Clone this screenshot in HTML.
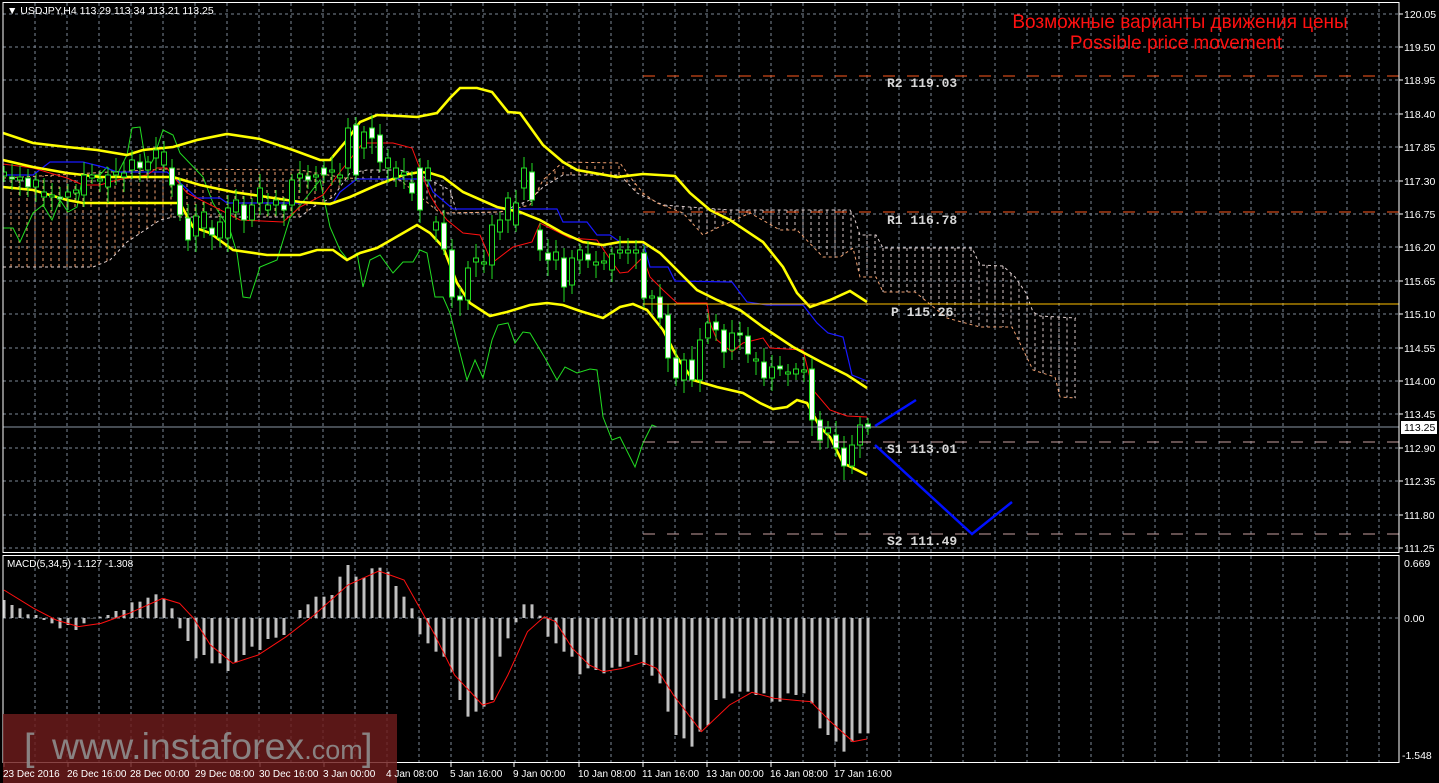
<!DOCTYPE html>
<html><head><meta charset="utf-8"><style>
html,body{margin:0;padding:0;background:#000;width:1439px;height:783px;overflow:hidden}
svg{display:block}
text{font-family:"Liberation Sans",sans-serif}
text.mono{font-family:"Liberation Mono",monospace}
</style></head><body>
<svg id="s" width="1439" height="783" xmlns="http://www.w3.org/2000/svg">
<defs>
<clipPath id="cm"><rect x="3" y="3" width="1396" height="549"/></clipPath>
<clipPath id="cd"><rect x="3" y="556" width="1396" height="206"/></clipPath>
</defs>
<g id="grid"></g>
<g id="cloud" clip-path="url(#cm)"></g>
<g id="lines" clip-path="url(#cm)"></g>
<g id="candles" clip-path="url(#cm)"></g>
<g id="macd" clip-path="url(#cd)"></g>
<line x1="643" y1="76" x2="1399" y2="76" stroke="#ff5a1e" stroke-width="1" stroke-dasharray="12,12"/>
<line x1="643" y1="212" x2="1399" y2="212" stroke="#ff5a1e" stroke-width="1" stroke-dasharray="12,12"/>
<line x1="643" y1="304" x2="1399" y2="304" stroke="#ffc000" stroke-width="1"/>
<line x1="643" y1="442" x2="1399" y2="442" stroke="#c8a0a0" stroke-width="1" stroke-dasharray="12,12"/>
<line x1="643" y1="534" x2="1399" y2="534" stroke="#c8a0a0" stroke-width="1" stroke-dasharray="12,12"/>
<line x1="3" y1="427" x2="1399" y2="427" stroke="#8a96a4" stroke-width="1"/>
<g font-weight="bold" font-size="13" fill="#d8d8d8">
<text class="mono" x="887" y="87">R2 119.03</text>
<text class="mono" x="887" y="224">R1 116.78</text>
<text class="mono" x="891" y="316">P 115.26</text>
<text class="mono" x="887" y="453">S1 113.01</text>
<text class="mono" x="887" y="545">S2 111.49</text>
</g>
<polyline points="875,426 916,400" fill="none" stroke="#0010ff" stroke-width="2.5"/>
<polyline points="875,445 972,534 1012,502" fill="none" stroke="#0010ff" stroke-width="2.5"/>
<text x="1180" y="28" font-size="19" fill="#ff1010" text-anchor="middle">Возможные варианты движения цены</text>
<text x="1176" y="49" font-size="19" fill="#ff1010" text-anchor="middle">Possible price movement</text>
<rect x="3" y="2.5" width="1396" height="550" fill="none" stroke="#fff" stroke-width="1"/>
<rect x="3" y="555.5" width="1396" height="207" fill="none" stroke="#fff" stroke-width="1"/>
<text x="7" y="14" font-size="10.5" fill="#fff">▼ USDJPY,H4  113.29 113.34 113.21 113.25</text>
<text x="7" y="567" font-size="10" fill="#fff">MACD(5,34,5) -1.127 -1.308</text>
<g id="axis" font-size="10.5" fill="#fff"></g>
<rect x="1401" y="421" width="36" height="13" fill="#fff"/>
<text x="1404" y="431" font-size="10.5" fill="#000">113.25</text>
<rect x="3" y="714" width="394" height="69" fill="rgb(110,28,28)" fill-opacity="0.82"/>
<text x="24" y="760" font-size="38" fill="#8e8e8e" fill-opacity="0.9">[</text>
<text x="52" y="759" font-size="37.5" fill="#8e8e8e" fill-opacity="0.9">www.instaforex<tspan font-size="27">.com</tspan></text>
<text x="362" y="760" font-size="38" fill="#8e8e8e" fill-opacity="0.9">]</text>
<g id="dates" font-size="10" fill="#fff"></g>
</svg>
<script>
var NS="http://www.w3.org/2000/svg";
function el(p,t,a,txt){var e=document.createElementNS(NS,t);for(var k in a)e.setAttribute(k,a[k]);if(txt)e.textContent=txt;document.getElementById(p).appendChild(e);return e;}
for(var x=35;x<=1380;x+=32){el("grid","line",{x1:x,y1:3,x2:x,y2:552,stroke:"#7d8796","stroke-dasharray":"3,3"});el("grid","line",{x1:x,y1:556,x2:x,y2:762,stroke:"#7d8796","stroke-dasharray":"3,3"});}
var labs=["120.05","119.50","118.95","118.40","117.85","117.30","116.75","116.20","115.65","115.10","114.55","114.00","113.45","112.90","112.35","111.80","111.25"];
for(var i=0;i<17;i++){var y=Math.round(13.5+33.4*i);el("grid","line",{x1:3,y1:y,x2:1399,y2:y,stroke:"#7d8796","stroke-dasharray":"3,3"});el("grid","line",{x1:1399,y1:y,x2:1403,y2:y,stroke:"#fff"});el("axis","text",{x:1404,y:y+4},labs[i]);}
el("grid","line",{x1:3,y1:618,x2:1399,y2:618,stroke:"#7d8796","stroke-dasharray":"3,3"});
el("axis","text",{x:1404,y:567},"0.669");el("axis","text",{x:1404,y:622},"0.00");el("axis","text",{x:1402,y:759},"-1.548");
var dl=[[3,"23 Dec 2016"],[67,"26 Dec 16:00"],[130,"28 Dec 00:00"],[195,"29 Dec 08:00"],[259,"30 Dec 16:00"],[323,"3 Jan 00:00"],[386,"4 Jan 08:00"],[450,"5 Jan 16:00"],[513,"9 Jan 00:00"],[578,"10 Jan 08:00"],[642,"11 Jan 16:00"],[706,"13 Jan 00:00"],[770,"16 Jan 08:00"],[834,"17 Jan 16:00"]];
dl.forEach(function(d){el("dates","text",{x:d[0],y:777},d[1]);el("grid","line",{x1:d[0]+1,y1:762,x2:d[0]+1,y2:767,stroke:"#fff"});});
function pl(g,pts,c,w,da){var a={points:pts.map(function(p){return p[0]+","+p[1]}).join(" "),fill:"none",stroke:c,"stroke-width":w};if(da)a["stroke-dasharray"]=da;el(g,"polyline",a);}
var A=[[3,267],[93,267],[110,260],[127,242],[160,220],[173,217],[300,217],[313,207],[333,197],[350,173],[367,170],[400,170],[420,175],[450,190],[457,213],[500,212],[530,200],[543,187],[563,175],[620,175],[637,193],[663,205],[730,210],[850,210],[854,217],[860,235],[876,235],[883,248],[972,248],[980,265],[1003,266],[1015,277],[1026,293],[1033,312],[1040,316],[1076,318]];
var B=[[3,178],[110,172],[167,169],[300,170],[345,178],[400,180],[440,213],[500,212],[530,205],[543,180],[563,162],[620,163],[630,177],[643,193],[657,203],[683,213],[703,235],[717,228],[750,213],[780,230],[797,230],[823,257],[840,257],[853,248],[860,277],[876,277],[883,292],[915,292],[947,318],[980,327],[1012,327],[1033,370],[1055,377],[1060,397],[1076,398]];
function interp(L,x){for(var i=0;i<L.length-1;i++){if(x>=L[i][0]&&x<=L[i+1][0]){var t=(x-L[i][0])/((L[i+1][0]-L[i][0])||1);return L[i][1]+t*(L[i+1][1]-L[i][1]);}}return L[L.length-1][1];}
for(var x=11;x<=1076;x+=8){var a=interp(A,x),b=interp(B,x);el("cloud","line",{x1:x,y1:a,x2:x,y2:b,stroke:(b>a?"#d8c8c8":"#f0a070"),"stroke-dasharray":"3,3","stroke-width":1});}
pl("cloud",A,"#e0d0d0",1,"3,3");pl("cloud",B,"#f0a070",1,"3,3");
var U=[[3,133],[33,143],[67,147],[97,150],[127,155],[143,150],[173,147],[197,140],[227,134],[260,139],[293,150],[320,160],[330,160],[347,140],[360,122],[377,115],[400,116],[417,117],[437,113],[450,98],[460,88],[477,88],[492,92],[508,112],[520,113],[543,145],[563,162],[577,170],[617,177],[643,174],[675,176],[690,193],[710,210],[730,220],[763,242],[783,267],[797,293],[810,307],[830,300],[850,291],[867,302]];
var M=[[3,160],[33,167],[67,173],[100,177],[147,177],[173,177],[200,185],[233,192],[267,197],[300,202],[330,204],[350,197],[377,185],[403,175],[420,172],[430,173],[443,177],[463,192],[497,207],[520,212],[540,220],[563,233],[583,242],[603,245],[620,242],[643,242],[660,253],[680,273],[697,290],[717,300],[740,310],[763,327],[793,347],[823,363],[847,375],[867,388]];
var Lw=[[3,187],[33,190],[67,200],[83,203],[133,203],[180,203],[193,227],[210,233],[233,250],[267,255],[300,255],[317,250],[333,250],[347,260],[360,253],[377,248],[417,225],[430,233],[443,247],[457,283],[470,303],[490,316],[507,312],[530,305],[547,303],[563,305],[580,311],[603,318],[620,307],[633,304],[647,310],[663,330],[677,357],[693,380],[717,387],[743,393],[760,403],[773,409],[787,407],[797,400],[807,403],[820,427],[830,437],[843,463],[867,475]];
var R=[[3,164],[33,168],[67,178],[83,185],[100,185],[117,180],[147,175],[157,168],[167,168],[172,175],[187,193],[240,220],[283,222],[300,207],[323,195],[340,172],[363,143],[393,143],[412,148],[430,195],[437,207],[447,220],[463,233],[480,235],[492,263],[513,247],[532,242],[540,223],[570,238],[597,240],[612,262],[620,273],[628,272],[643,257],[650,277],[663,290],[677,303],[707,303],[710,323],[717,340],[732,352],[743,343],[763,338],[770,348],[803,350],[813,390],[830,410],[847,416],[867,417]];
var Bl=[[3,175],[33,175],[50,162],[83,162],[103,167],[117,172],[167,172],[177,180],[197,198],[220,198],[227,203],[333,203],[340,192],[357,179],[427,179],[433,192],[453,209],[557,209],[563,222],[587,222],[597,235],[610,235],[620,242],[643,242],[650,267],[668,267],[675,281],[732,282],[747,302],[767,305],[803,305],[817,323],[828,333],[843,337],[852,375],[867,381]];
var G=[[3,228],[13,228],[20,242],[33,213],[43,205],[52,220],[60,200],[68,212],[77,207],[83,175],[100,175],[107,167],[117,175],[127,155],[132,128],[140,127],[147,170],[153,160],[163,130],[173,135],[180,153],[203,177],[213,203],[230,230],[237,253],[243,297],[250,298],[260,267],[277,260],[290,218],[310,193],[320,180],[330,227],[340,250],[348,260],[357,253],[363,287],[370,260],[380,255],[393,273],[403,262],[413,262],[420,250],[427,253],[435,297],[443,297],[450,313],[460,353],[467,380],[475,360],[483,378],[492,340],[498,325],[508,323],[515,343],[523,332],[530,333],[545,358],[557,380],[565,367],[577,373],[590,369],[597,370],[603,417],[612,440],[620,437],[635,467],[643,443],[652,425],[657,427]];
pl("lines",G,"#22dd22",1);pl("lines",Bl,"#1818ff",1.2);pl("lines",R,"#ff1010",1);
pl("lines",U,"#ffff00",2.6);pl("lines",M,"#ffff00",2.6);pl("lines",Lw,"#ffff00",2.6);
var C=[[172,176,0],[177,179,1],[177,180,0],[178,187,1],[180,187,0],[192,197,0],[195,197,0],[197,199,1],[192,197,0],[190,193,0],[175,195,0],[175,178,0],[179,181,0],[175,187,0],[172,175,0],[173,177,0],[160,170,0],[162,168,1],[162,170,0],[150,158,0],[152,165,0],[168,185,1],[185,215,1],[218,240,1],[216,236,0],[212,228,0],[228,235,1],[222,238,0],[208,238,0],[200,212,0],[205,220,1],[205,220,0],[188,203,0],[205,210,0],[200,205,0],[205,210,1],[180,205,0],[174,178,0],[176,180,1],[175,177,0],[168,175,1],[170,172,0],[175,178,0],[128,168,0],[125,175,1],[132,148,0],[128,138,1],[135,162,1],[158,168,0],[168,178,0],[172,175,0],[183,193,1],[168,210,1],[168,180,0],[222,230,0],[223,249,1],[250,297,1],[296,300,1],[268,300,0],[258,262,0],[262,264,0],[225,265,0],[220,232,0],[198,220,0],[203,225,0],[168,188,0],[172,200,1],[230,250,1],[253,260,1],[252,260,0],[258,287,1],[258,285,0],[250,260,0],[254,260,1],[262,265,0],[261,263,0],[254,270,0],[250,253,0],[250,253,0],[250,253,0],[253,298,1],[296,298,0],[297,318,1],[315,358,1],[358,378,1],[360,380,0],[360,380,1],[340,380,0],[323,338,0],[322,330,1],[330,352,1],[333,350,0],[333,335,1],[336,354,1],[359,361,0],[362,378,1],[367,378,0],[366,369,1],[372,374,0],[369,374,0],[370,371,0],[369,420,1],[420,440,1],[428,433,0],[435,448,1],[448,466,1],[445,466,0],[425,445,0],[424,428,1]];
C.forEach(function(c,i){var x=4+8*i;var wt=c[0]-6-((i*7)%9),wb=c[1]+6+((i*5)%11);
el("candles","line",{x1:x,y1:wt,x2:x,y2:wb,stroke:"#22dd22","stroke-width":1});
el("candles","rect",{x:x-2.5,y:c[0],width:5,height:Math.max(2,c[1]-c[0]),fill:c[2]?"#fff":"#000",stroke:"#22dd22","stroke-width":1});});
var H=[135,150,160,178,180,195,205,220,210,225,205,190,185,180,168,165,142,140,128,118,130,160,220,258,310,300,325,325,348,322,300,275,285,252,248,240,190,165,148,125,125,120,65,30,65,68,40,38,50,93,125,160,238,265,290,305,350,435,485,470,455,435,305,250,202,148,148,182,245,265,290,305,358,340,345,355,338,335,320,300,330,362,385,470,540,550,575,530,510,435,430,415,410,410,420,415,440,440,415,420,415,445,520,540,560,590,560,535,535];
H.forEach(function(d,i){var x=4+8*i;var y=555+d/3;el("macd","line",{x1:x,y1:618,x2:x,y2:y,stroke:"#c0c0c0","stroke-width":3});});
var S=[[7,105],[60,160],[100,195],[140,215],[180,205],[230,175],[290,130],[320,145],[345,190],[375,270],[415,325],[460,300],[510,245],[560,180],[620,90],[675,48],[720,75],[745,150],[775,240],[810,360],[860,450],[880,440],[905,360],[940,230],[970,185],[990,200],[1020,280],[1050,330],[1075,350],[1110,340],[1145,322],[1170,340],[1200,420],[1250,530],[1300,450],[1340,412],[1380,430],[1430,438],[1445,440],[1480,500],[1520,560],[1545,552]].map(function(p){return [p[0]/1.782,555+p[1]/3];});
pl("macd",S,"#ff1010",1);
</script>
</body></html>
